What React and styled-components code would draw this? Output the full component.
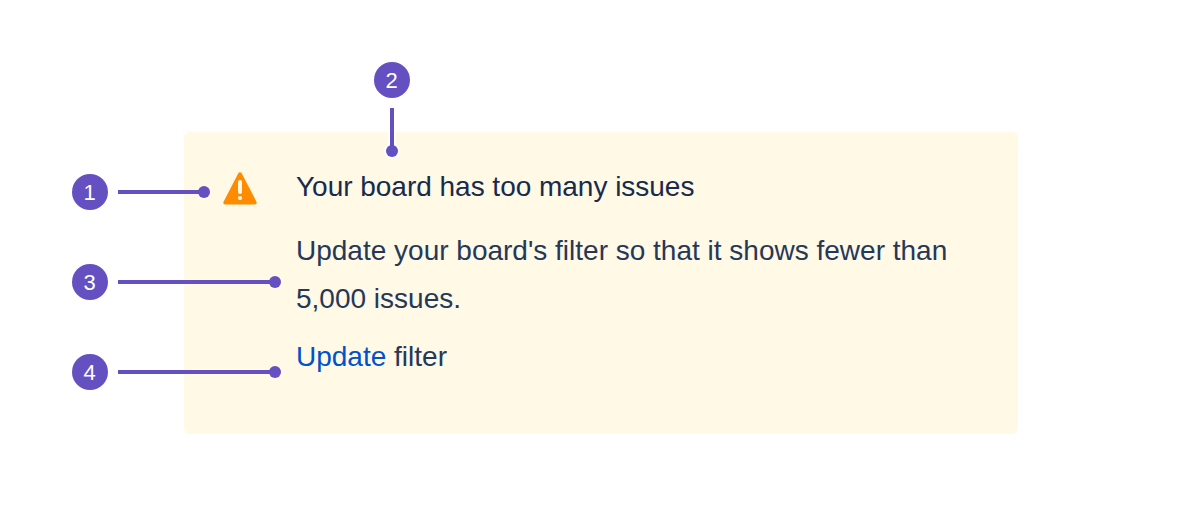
import React from "react";
import styled, { createGlobalStyle } from "styled-components";

const purple = "#6550c2";

const GlobalStyle = createGlobalStyle`
  * { box-sizing: border-box; }
  body {
    margin: 0;
    background: #fff;
    font-family: "Liberation Sans", Helvetica, Arial, sans-serif;
  }
`;

const Page = styled.main`
  position: relative;
  width: 1200px;
  height: 524px;
  padding: 132px 182px 90px 184px;
`;

const Message = styled.section`
  display: flex;
  align-items: flex-start;
  gap: 39px;
  height: 302px;
  padding: 31px 40px 40px 39px;
  border-radius: 6px;
  background: #fff9e6;
`;

const WarningIcon = styled.svg`
  flex: none;
  width: 34px;
  height: 34px;
  margin-top: 9px;
`;

const Content = styled.div`
  flex: 1;
  color: #253858;
  font-size: 28px;
`;

const Title = styled.h1`
  margin: 0 0 16px;
  color: #172b4d;
  font-size: 28px;
  font-weight: 400;
  line-height: 48px;
  letter-spacing: -0.02px;
`;

const Description = styled.p`
  margin: 0;
  line-height: 48px;
`;

const Action = styled.p`
  margin: 10px 0 0;
  line-height: 48px;
`;

const ActionLink = styled.a`
  color: #0052cc;
  text-decoration: none;
`;

const Callout = styled.div`
  position: absolute;
  left: ${(p) => p.$x}px;
  top: ${(p) => p.$y}px;
  display: flex;
  flex-direction: ${(p) => (p.$vertical ? "column" : "row")};
  align-items: center;
  gap: 10px;
`;

const Marker = styled.span`
  display: flex;
  flex: none;
  align-items: center;
  justify-content: center;
  width: 36px;
  height: 36px;
  padding: 2px 1px 0 0;
  border-radius: 50%;
  background: ${purple};
  color: #fff;
  font-size: 22px;
  line-height: 34px;
`;

const Pointer = styled.span`
  display: flex;
  flex-direction: ${(p) => (p.$vertical ? "column" : "row")};
  align-items: center;
`;

const Stem = styled.span`
  width: ${(p) => (p.$vertical ? 4 : p.$length)}px;
  height: ${(p) => (p.$vertical ? p.$length : 4)}px;
  background: ${purple};
  box-shadow: ${(p) => (p.$vertical ? "0 0 0 2px #fff" : "none")};
`;

const Dot = styled.span`
  position: relative;
  width: 12px;
  height: 12px;
  margin: ${(p) => (p.$vertical ? "-1px 0 0" : "0 0 0 -1px")};
  border-radius: 50%;
  background: ${purple};
  box-shadow: ${(p) => (p.$vertical ? "0 0 0 2px #fff" : "none")};

  &::before {
    content: "";
    position: absolute;
    display: ${(p) => (p.$vertical ? "block" : "none")};
    left: 4px;
    top: -4px;
    width: 4px;
    height: 8px;
    background: ${purple};
  }
`;

const callouts = [
  { n: 1, x: 72, y: 174, length: 81 },
  { n: 2, x: 374, y: 62, length: 38, vertical: true },
  { n: 3, x: 72, y: 264, length: 152 },
  { n: 4, x: 72, y: 354, length: 152 },
];

export default function App() {
  return (
    <>
      <GlobalStyle />
      <Page>
        <Message>
          <WarningIcon viewBox="0 0 34 34" aria-hidden="true">
            <path
              fill="#ff8b00"
              d="M15.2 1.6C16-.1 18-.1 18.8 1.6L33.3 29.4C34.2 31 33.4 32.4 31.7 32.4H2.3C.6 32.4-.2 31 .7 29.4Z"
            />
            <path d="M17 10V20" stroke="#fff9e6" strokeWidth="4" strokeLinecap="round" />
            <circle cx="17" cy="26" r="2.1" fill="#fff9e6" />
          </WarningIcon>
          <Content>
            <Title>Your board has too many issues</Title>
            <Description>
              Update your board's filter so that it shows fewer than 5,000 issues.
            </Description>
            <Action>
              <ActionLink>Update</ActionLink> filter
            </Action>
          </Content>
        </Message>
        {callouts.map((c) => (
          <Callout key={c.n} $x={c.x} $y={c.y} $vertical={c.vertical}>
            <Marker>{c.n}</Marker>
            <Pointer $vertical={c.vertical}>
              <Stem $vertical={c.vertical} $length={c.length} />
              <Dot $vertical={c.vertical} />
            </Pointer>
          </Callout>
        ))}
      </Page>
    </>
  );
}
